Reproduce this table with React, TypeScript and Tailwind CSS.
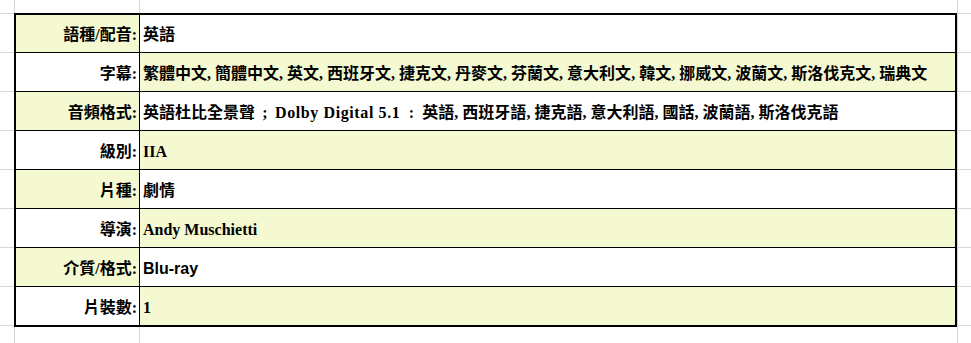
import { Fragment, type ReactNode } from "react";

const serif = "font-['Liberation_Serif','Noto_Sans_CJK_TC',serif]";

// the sheet font sets commas half-width, wider than Liberation's
const withCommas = (text: string) =>
  text.split(",").map((part, i) => (
    <Fragment key={i}>
      {i > 0 && <span className="mr-[4px]">,</span>}
      {part}
    </Fragment>
  ));

const rows: { label: string; value: ReactNode; sans?: boolean }[] = [
  { label: "語種/配音:", value: "英語" },
  {
    label: "字幕:",
    value: withCommas(
      "繁體中文,簡體中文,英文,西班牙文,捷克文,丹麥文,芬蘭文,意大利文,韓文,挪威文,波蘭文,斯洛伐克文,瑞典文"
    ),
  },
  {
    label: "音頻格式:",
    value: (
      <>
        英語杜比全景聲
        <span className="inline-block w-[20px] text-center">;</span>
        <span className="tracking-[0.6px]">Dolby Digital 5.1</span>
        <span className="inline-block w-[22px] text-center">:</span>
        {withCommas("英語,西班牙語,捷克語,意大利語,國話,波蘭語,斯洛伐克語")}
      </>
    ),
  },
  { label: "級別:", value: "IIA" },
  { label: "片種:", value: "劇情" },
  { label: "導演:", value: "Andy Muschietti" },
  { label: "介質/格式:", value: "Blu-ray", sans: true },
  { label: "片裝數:", value: "1" },
];

const Strip = ({ h }: { h: string }) => (
  <div className={`flex ${h}`}>
    <div className="w-[15px] border-r border-[#d6d6d6]" />
    <div className="w-[125px] border-r border-[#d6d6d6]" />
    <div className="w-[818px] border-r border-[#d6d6d6]" />
    <div className="flex-1" />
  </div>
);

const Margin = ({ className }: { className: string }) => (
  <div className={`flex flex-col ${className}`}>
    <div className="h-[1px] bg-[#d6d6d6]" />
    {rows.map((r) => (
      <div key={r.label} className="h-[39px] border-b border-[#d6d6d6]" />
    ))}
  </div>
);

export default function App() {
  return (
    <div className="h-[343px] w-[971px] overflow-hidden bg-white text-black">
      <Strip h="h-[13px]" />
      <div className="flex">
        <Margin className="w-[14px]" />
        <div className="w-[943px] border-2 border-black">
          {rows.map((r, i) => {
            const odd = i % 2 === 1;
            return (
              <div
                key={r.label}
                className={`flex ${i === 0 ? "h-[37px]" : "h-[39px] border-t border-black"}`}
              >
                <div
                  className={`flex w-[124px] items-center justify-end border-r border-black pr-[2px] pt-[3px] text-[16px] font-bold ${serif} ${
                    odd ? "bg-white" : "bg-[#f4f9d1]"
                  }`}
                >
                  {r.label}
                </div>
                <div
                  className={`flex flex-1 items-center pl-[3px] pt-[3px] text-[16px] font-bold whitespace-nowrap ${
                    r.sans ? "font-['Liberation_Sans',sans-serif]" : serif
                  } ${odd ? "bg-[#f4f9d1]" : "bg-white"}`}
                >
                  <span>{r.value}</span>
                </div>
              </div>
            );
          })}
        </div>
        <Margin className="flex-1 border-l border-[#d6d6d6]" />
      </div>
      <Strip h="h-[17px]" />
    </div>
  );
}
